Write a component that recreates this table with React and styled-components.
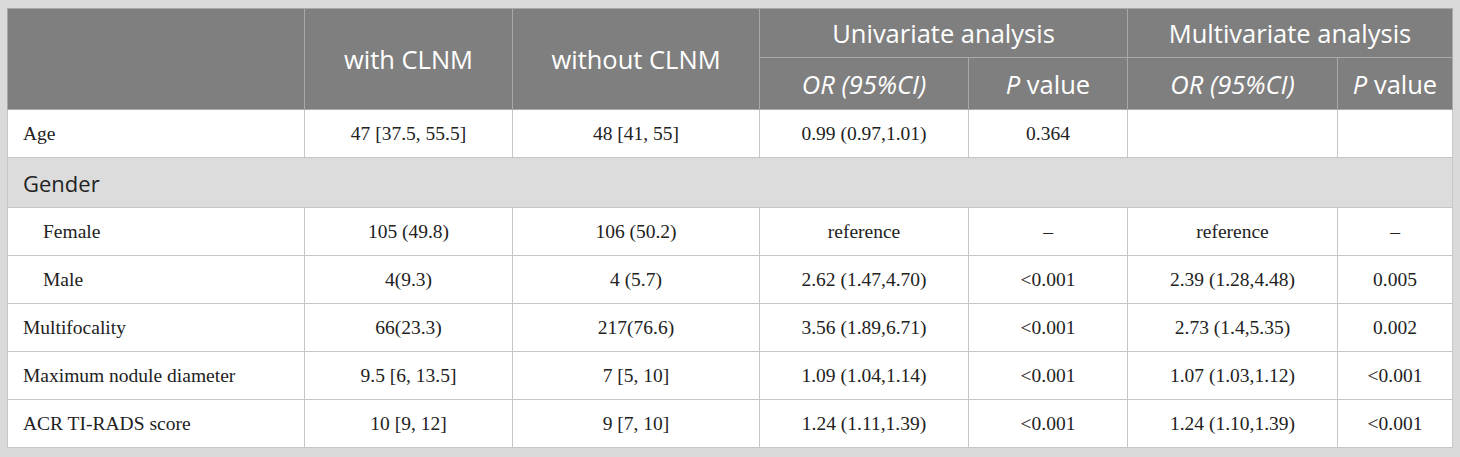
import React from 'react';
import styled, { createGlobalStyle } from 'styled-components';

const GlobalStyle = createGlobalStyle`
  html, body {
    margin: 0;
    padding: 0;
    background: #dadada;
  }
`;

const Page = styled.div`
  padding: 8px 8px 8px 7px;
  width: 1460px;
  height: 457px;
  box-sizing: border-box;
`;

const Table = styled.table`
  width: 1445px;
  table-layout: fixed;
  border-collapse: collapse;
  background: #fff;
`;

const HeadCell = styled.th`
  background: #7f7f7f;
  color: #fff;
  font-family: 'Open Sans', 'Noto Sans', sans-serif;
  font-weight: 400;
  font-size: 25.5px;
  text-align: center;
  border: 1px solid #a9a9a9;
  padding: 0;
  height: ${(p) => p.$h || 49}px;
  box-sizing: border-box;
  font-style: ${(p) => (p.$italic ? 'italic' : 'normal')};
`;

const Cell = styled.td`
  font-family: 'Liberation Serif', 'Times New Roman', serif;
  font-size: 19.5px;
  color: #222;
  text-align: ${(p) => (p.$left ? 'left' : 'center')};
  padding: 0 0 0 ${(p) => (p.$indent ? 35 : p.$left ? 15 : 0)}px;
  border: 1px solid #c6c6c6;
  height: 48px;
  box-sizing: border-box;
`;

const GroupCell = styled.td`
  background: #dcdcdc;
  font-family: 'Open Sans', 'Noto Sans', sans-serif;
  font-size: 22px;
  color: #222;
  padding: 0 0 0 15px;
  border: 1px solid #c6c6c6;
  height: 50px;
  box-sizing: border-box;
`;

const Em = styled.i`
  font-style: italic;
`;

const widths = [297, 208, 247, 209, 159, 210, 115];

const rows = [
  { label: 'Age', v: ['47 [37.5, 55.5]', '48 [41, 55]', '0.99 (0.97,1.01)', '0.364', '', ''] },
  { group: 'Gender' },
  { label: 'Female', indent: true, v: ['105 (49.8)', '106 (50.2)', 'reference', '–', 'reference', '–'] },
  { label: 'Male', indent: true, v: ['4(9.3)', '4 (5.7)', '2.62 (1.47,4.70)', '<0.001', '2.39 (1.28,4.48)', '0.005'] },
  { label: 'Multifocality', v: ['66(23.3)', '217(76.6)', '3.56 (1.89,6.71)', '<0.001', '2.73 (1.4,5.35)', '0.002'] },
  { label: 'Maximum nodule diameter', v: ['9.5 [6, 13.5]', '7 [5, 10]', '1.09 (1.04,1.14)', '<0.001', '1.07 (1.03,1.12)', '<0.001'] },
  { label: 'ACR TI-RADS score', v: ['10 [9, 12]', '9 [7, 10]', '1.24 (1.11,1.39)', '<0.001', '1.24 (1.10,1.39)', '<0.001'] },
];

export default function App() {
  return (
    <Page>
      <GlobalStyle />
      <Table>
        <colgroup>
          {widths.map((w, i) => (
            <col key={i} style={{ width: w }} />
          ))}
        </colgroup>
        <thead>
          <tr>
            <HeadCell rowSpan={2} />
            <HeadCell rowSpan={2}>with CLNM</HeadCell>
            <HeadCell rowSpan={2}>without CLNM</HeadCell>
            <HeadCell colSpan={2}>Univariate analysis</HeadCell>
            <HeadCell colSpan={2}>Multivariate analysis</HeadCell>
          </tr>
          <tr>
            <HeadCell $h={52} $italic>OR (95%CI)</HeadCell>
            <HeadCell $h={52}><Em>P</Em> value</HeadCell>
            <HeadCell $h={52} $italic>OR (95%CI)</HeadCell>
            <HeadCell $h={52}><Em>P</Em> value</HeadCell>
          </tr>
        </thead>
        <tbody>
          {rows.map((r, i) =>
            r.group ? (
              <tr key={i}>
                <GroupCell colSpan={7}>{r.group}</GroupCell>
              </tr>
            ) : (
              <tr key={i}>
                <Cell $left $indent={r.indent}>{r.label}</Cell>
                {r.v.map((v, j) => (
                  <Cell key={j}>{v}</Cell>
                ))}
              </tr>
            )
          )}
        </tbody>
      </Table>
    </Page>
  );
}
